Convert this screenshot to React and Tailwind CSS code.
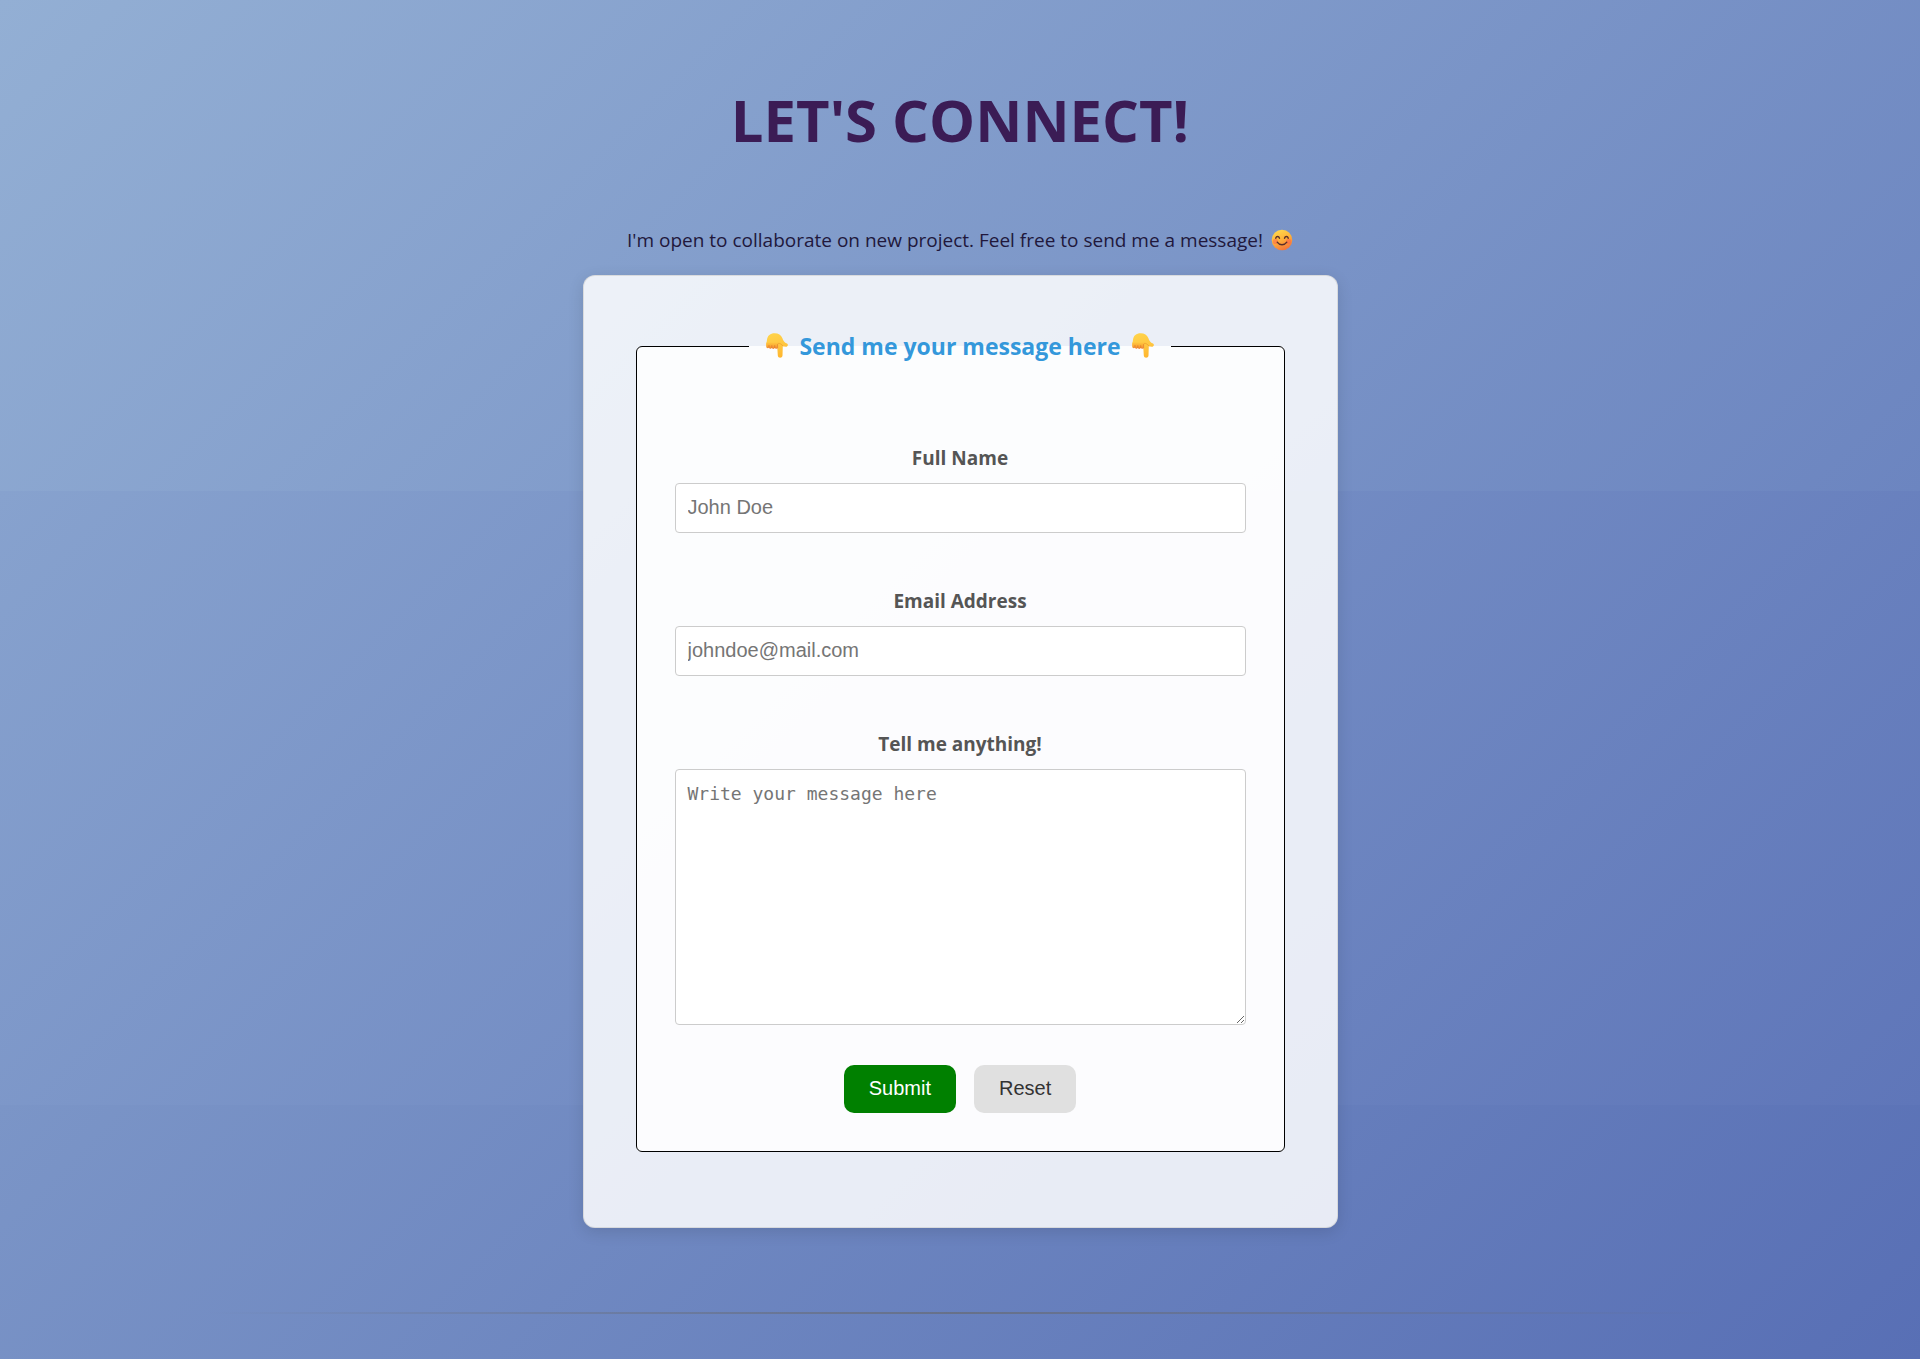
function PointDown() {
  return (
    <svg className="inline-block h-[26px] w-6 shrink-0" viewBox="-1 0 24 26" role="img" aria-label="pointing down">
      <defs>
        <linearGradient id="hand" x1="0.3" y1="0" x2="0.6" y2="1">
          <stop offset="0" stopColor="#ffd34a" />
          <stop offset="0.55" stopColor="#ffc640" />
          <stop offset="1" stopColor="#ffb62e" />
        </linearGradient>
        <linearGradient id="knuckles" x1="0" y1="0" x2="0" y2="1">
          <stop offset="0" stopColor="#ffc63f" />
          <stop offset="0.5" stopColor="#fbab35" />
          <stop offset="1" stopColor="#ee8030" />
        </linearGradient>
      </defs>
      <path
        d="M1 6.800C1.500 2.500 4.300.3 8.600.3c4 0 6.400 1.500 7.700 4.800 1 2.900 2.200 4.800 4.700 5.500 1.400.5 1.100 2.800-.4 3.100-1.500.2-2.800-.1-3.800-.7l-.3 9.500c-.2 3-4.500 3-4.700 0L11.200 13 .6 13C-.2 11.600.8 9.300 1 6.800z"
        fill="url(#hand)"
      />
      <path
        d="M.4 9.500h11.200v4.700c-.1 2-2.400 2.200-2.900.6-.4 1.600-2.500 1.500-2.900 0-.5 1.500-2.400 1.300-2.800-.2C2.300 15.900.3 15.400.2 13.600z"
        fill="url(#knuckles)"
      />
      <path d="M3 12.400v2M5.800 12.600v2M8.700 12.600v2M11.600 11.500v3.500" fill="none" stroke="#dc6f2c" strokeWidth="0.6" strokeLinecap="round" />
      <path d="M12.200 10.300c1.700-.2 3.300.8 4.700 2.700" fill="none" stroke="#f0a02f" strokeWidth="0.8" strokeLinecap="round" />
    </svg>
  );
}

function Smile() {
  return (
    <svg className="inline-block h-[22px] w-[22px] shrink-0" viewBox="0 0 22 22" role="img" aria-label="smiling face">
      <defs>
        <linearGradient id="face" x1="0.3" y1="0" x2="0.7" y2="1">
          <stop offset="0" stopColor="#ffd84d" />
          <stop offset="0.45" stopColor="#ffb43a" />
          <stop offset="1" stopColor="#f2703a" />
        </linearGradient>
      </defs>
      <circle cx="11" cy="11" r="10.300" fill="url(#face)" />
      <circle cx="4.400" cy="12.400" r="2.600" fill="#ff5f4d" opacity="0.5" />
      <circle cx="17.600" cy="12.400" r="2.600" fill="#ff5f4d" opacity="0.5" />
      <path d="M4.700 9.200c.7-2.200 3.100-2.200 3.800 0M13.500 9.200c.7-2.200 3.100-2.200 3.800 0M6.200 13.200c2.400 3.400 7.200 3.400 9.600 0" fill="none" stroke="#5a2f2a" strokeWidth="1.400" strokeLinecap="round" />
    </svg>
  );
}

function Field({ id, label, children }) {
  return (
    <div className="flex flex-col gap-[11px]">
      <label htmlFor={id} className="text-center text-[19px] leading-7 font-bold text-[#555]">
        {label}
      </label>
      {children}
    </div>
  );
}

export default function App() {
  return (
    <main className="flex min-h-screen flex-col items-center bg-[#6b84c0] bg-[linear-gradient(135deg,#93afd4,#6c85c0),linear-gradient(135deg,#87a2ce,#5f76b9),linear-gradient(135deg,#7b95c7,#586fb5)] [background-position:0_0,0_491px,0_100%] [background-size:100%_491px,100%_614px,100%_calc(100%-1105px)] bg-no-repeat px-4 pt-20 pb-[46px] font-['Open_Sans','Noto_Sans',sans-serif]">
      <h1 className="text-center text-[58px] leading-20 font-bold text-[#3b1c55]">LET'S CONNECT!</h1>

      <p className="mt-16 flex items-center gap-2 text-[19px] leading-8 text-[#21183c]">
        I'm open to collaborate on new project. Feel free to send me a message!
        <Smile />
      </p>

      <form
        className="mt-[19px] w-full max-w-[755px] rounded-xl border border-[#ccc]/60 bg-white/85 px-[52px] pt-[52px] pb-[75px] shadow-[0_4px_16px_rgba(0,0,0,0.12)]"
        onSubmit={(event) => event.preventDefault()}
      >
        <fieldset className="rounded-md border border-black bg-white/85 px-[38px] pb-[38px]">
          <legend className="mx-auto px-4 text-[23px] leading-9 font-bold text-[#3498db]">
            <span className="flex items-center gap-2.5">
              <PointDown />
              Send me your message here
              <PointDown />
            </span>
          </legend>

          <div className="mt-20 flex flex-col gap-[54px]">
            <Field id="name" label="Full Name">
              <input
                id="name"
                type="text"
                placeholder="John Doe"
                className="h-[50px] w-full rounded border border-[#ccc] bg-white px-3 pb-0.5 font-['Liberation_Sans',sans-serif] text-xl placeholder:text-[#757575]"
              />
            </Field>
            <Field id="email" label="Email Address">
              <input
                id="email"
                type="email"
                placeholder="johndoe@mail.com"
                className="h-[50px] w-full rounded border border-[#ccc] bg-white px-3 pb-0.5 font-['Liberation_Sans',sans-serif] text-xl placeholder:text-[#757575]"
              />
            </Field>
            <Field id="message" label="Tell me anything!">
              <textarea
                id="message"
                placeholder="Write your message here"
                className="h-64 w-full resize rounded border border-[#ccc] bg-white px-3 py-3 font-['DejaVu_Sans_Mono',monospace] text-lg leading-6 placeholder:text-[#757575]"
              />
            </Field>
          </div>

          <div className="mt-10 flex justify-center gap-[18px] font-['Liberation_Sans',sans-serif] text-xl leading-6">
            <button type="submit" className="h-12 rounded-[10px] bg-[#008000] px-[25px] pb-0.5 text-white">
              Submit
            </button>
            <button type="reset" className="h-12 rounded-[10px] bg-[#e0e0e0] px-[25px] pb-0.5 text-[#333]">
              Reset
            </button>
          </div>
        </fieldset>
      </form>

      <hr className="mt-21 h-0.5 w-4/5 border-0 bg-linear-to-r from-transparent via-[#666]/60 to-transparent" />
    </main>
  );
}
